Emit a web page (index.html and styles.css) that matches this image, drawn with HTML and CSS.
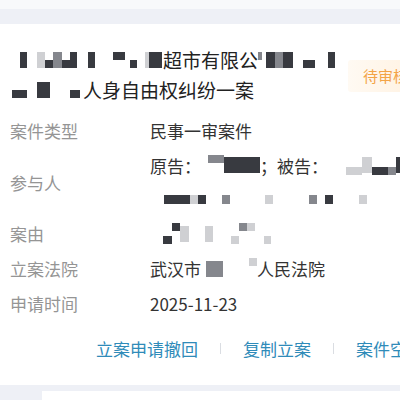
FILE: index.html
```html
<!DOCTYPE html>
<html lang="zh-CN">
<head>
  <meta charset="UTF-8" />
  <title>立案记录</title>
  <link rel="stylesheet" href="styles.css">
</head>
<body>
  <div class="prev-card"></div>

  <div class="case-card">
    <div class="case-head">
      <div class="case-title">
        <div class="title-line">
          <span class="mz w10 blank"></span><span class="mz w7 dark"></span><span class="mz w10 blank"></span><span class="mz w8 light"></span><span class="mz w8 dark lo"></span><span class="mz w9 mid"></span><span class="mz w8 dark lo"></span><span class="mz w7 dark"></span><span class="mz w11 blank"></span><span class="mz w7 dark"></span><span class="mz w18 blank"></span><span class="mz w12 dark hi"></span><span class="mz w5 blank"></span><span class="mz w7 dark lo"></span><span class="mz w8 blank"></span><span class="mz w4 light"></span><span class="mz w13 dark"></span><span class="mz w1 blank"></span>超市有限公<span class="mz w4 mid hi"></span><span class="mz w4 blank"></span><span class="mz w9 dark"></span><span class="mz w8 mid"></span><span class="mz w10 dark"></span><span class="mz w10 blank"></span><span class="mz w12 dark lo"></span><span class="mz w13 blank"></span><span class="mz w7 dark"></span>
        </div>
        <div class="title-line">
          <span class="mz w2 blank"></span><span class="mz w15 dark lo"></span><span class="mz w10 blank"></span><span class="mz w13 dark"></span><span class="mz w20 blank"></span><span class="mz w10 dark lo"></span><span class="mz w3 blank"></span>人身自由权纠纷一案
        </div>
      </div>
      <span class="status">待审核</span>
    </div>

    <div class="info">
      <div class="info-label">案件类型</div>
      <div class="info-value">民事一审案件</div>

      <div class="info-label">参与人</div>
      <div class="info-value">
        <div class="value-line">原告：<span class="mz w7 blank"></span><span class="mz w16 mid hi"></span><span class="mz w20 dark"></span><span class="mz w16 dark"></span>；被告：<span class="mz w18 blank"></span><span class="mz w16 light lo"></span><span class="mz w10 light"></span><span class="mz w16 dark lo"></span><span class="mz w8 mid lo"></span><span class="mz w12 dark"></span></div>
        <div class="value-line">
          <span class="mz w14 blank"></span><span class="mz w26 dark sm"></span><span class="mz w8 light sm"></span><span class="mz w8 dark sm"></span><span class="mz w16 blank"></span><span class="mz w8 mid sm"></span><span class="mz w35 blank"></span><span class="mz w8 light sm"></span><span class="mz w36 blank"></span><span class="mz w8 mid sm"></span><span class="mz w8 blank"></span><span class="mz w8 dark sm"></span><span class="mz w26 blank"></span><span class="mz w8 light sm"></span>
        </div>
      </div>

      <div class="info-label">案由</div>
      <div class="info-value">
        <span class="mz w13 blank"></span><span class="mz w9 dark lo"></span><span class="mz w8 dark hi"></span><span class="mz w9 light"></span><span class="mz w16 blank"></span><span class="mz w8 light"></span><span class="mz w18 blank"></span><span class="mz w8 light lo"></span><span class="mz w8 mid hi"></span><span class="mz w8 light hi"></span><span class="mz w9 blank"></span><span class="mz w7 light lo"></span>
      </div>

      <div class="info-label">立案法院</div>
      <div class="info-value">武汉市<span class="mz w5 blank"></span><span class="mz w17 mid"></span><span class="mz w26 blank"></span><span class="mz w8 light hi"></span>人民法院</div>

      <div class="info-label">申请时间</div>
      <div class="info-value">2025-11-23</div>
    </div>

    <div class="actions">
      <a class="action">立案申请撤回</a>
      <span class="divider"></span>
      <a class="action">复制立案</a>
      <span class="divider"></span>
      <a class="action">案件空间</a>
    </div>
  </div>

  <div class="next-wrap">
    <div class="next-card"></div>
  </div>
</body>
</html>
```

FILE: styles.css
```css
body {
  margin: 0;
  width: 400px;
  height: 400px;
  overflow: hidden;
  background: #eef0f6;
  font-family: "Noto Sans CJK SC", "Noto Sans", sans-serif;
}

.prev-card {
  height: 9px;
  background: #f8f9fb;
  margin-bottom: 15px;
}

.case-card {
  background: #ffffff;
  padding: 21px 0 0 10px;
  height: 340px;
  overflow: hidden;
}

.case-head {
  display: flex;
  align-items: flex-start;
}

.case-title {
  width: 338px;
  flex-shrink: 0;
  font-size: 19px;
  line-height: 30px;
  color: #222;
  white-space: nowrap;
}

.title-line {
  display: flex;
  align-items: center;
  height: 30px;
}

.status {
  flex-shrink: 0;
  margin-top: 15px;
  padding: 7px 14px 7px 15px;
  background: linear-gradient(to right, #fffaf3, #fff1e0);
  color: #f3a447;
  font-size: 15px;
  line-height: 18px;
  white-space: nowrap;
  border-radius: 3px 0 0 3px;
}

/* mosaic blocks standing in for hidden names */
.mz {
  display: inline-block;
  height: 16px;
  flex-shrink: 0;
}

.mz.lo {
  height: 8px;
  align-self: flex-end;
  margin-bottom: 7px;
}

.mz.hi {
  height: 8px;
  align-self: flex-start;
  margin-top: 7px;
}

.mz.sm {
  height: 9px;
}

.dark { background: #383a40; }
.mid { background: #85878d; }
.light { background: #cfd0d3; }
.blank { background: transparent; }

.w1 { width: 1px; }
.w2 { width: 2px; }
.w3 { width: 3px; }
.w4 { width: 4px; }
.w5 { width: 5px; }
.w6 { width: 6px; }
.w7 { width: 7px; }
.w8 { width: 8px; }
.w9 { width: 9px; }
.w10 { width: 10px; }
.w11 { width: 11px; }
.w12 { width: 12px; }
.w13 { width: 13px; }
.w14 { width: 14px; }
.w15 { width: 15px; }
.w16 { width: 16px; }
.w17 { width: 17px; }
.w18 { width: 18px; }
.w20 { width: 20px; }
.w26 { width: 26px; }
.w35 { width: 35px; }
.w36 { width: 36px; }

.info {
  display: grid;
  grid-template-columns: 140px 1fr;
  align-items: center;
  margin-top: 8px;
  font-size: 17px;
  line-height: 35px;
}

.info-label {
  color: #959595;
}

.info-value {
  color: #333;
  display: flex;
  align-items: center;
  white-space: nowrap;
  height: 35px;
  overflow: hidden;
}

.info-value:has(.value-line) {
  display: block;
  height: auto;
}

.value-line {
  display: flex;
  align-items: center;
  height: 34px;
}

.actions {
  display: flex;
  align-items: center;
  gap: 22px;
  margin-top: 10px;
  padding-left: 86px;
  height: 34px;
  white-space: nowrap;
}

.action {
  color: #2f8bb9;
  font-size: 17px;
}

.divider {
  width: 1px;
  height: 11px;
  background: #dadde2;
  flex-shrink: 0;
}

.next-wrap {
  padding: 6px 0 0 42px;
}

.next-card {
  height: 9px;
  background: #ffffff;
}
```
